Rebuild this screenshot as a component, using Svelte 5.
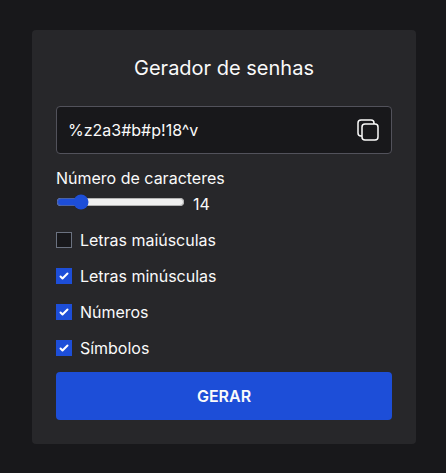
<script>
  let length = $state(14);
  let password = $state('%z2a3#b#p!18^v');
  let options = $state([
    { label: 'Letras maiúsculas', chars: 'ABCDEFGHIJKLMNOPQRSTUVWXYZ', checked: false },
    { label: 'Letras minúsculas', chars: 'abcdefghijklmnopqrstuvwxyz', checked: true },
    { label: 'Números', chars: '0123456789', checked: true },
    { label: 'Símbolos', chars: '!@#$%^&*', checked: true }
  ]);

  function generate() {
    const pool = options.filter((o) => o.checked).map((o) => o.chars).join('');
    if (!pool) return;
    password = Array.from({ length }, () => pool[Math.floor(Math.random() * pool.length)]).join('');
  }

  function copy() {
    navigator.clipboard?.writeText(password);
  }
</script>

<main>
  <section class="card">
    <h1>Gerador de senhas</h1>

    <div class="output">
      <input type="text" readonly value={password} aria-label="Senha" />
      <button class="copy" aria-label="Copiar" onclick={copy}>
        <svg width="24" height="24" viewBox="0 0 24 24" fill="none" stroke="currentColor" stroke-width="1.5" stroke-linejoin="round">
          <rect x="6" y="6" width="16" height="16" rx="3" />
          <path d="M18 6V5a3 3 0 0 0-3-3H5a3 3 0 0 0-3 3v10a3 3 0 0 0 3 3h1" />
        </svg>
      </button>
    </div>

    <label class="caption" for="length">Número de caracteres</label>
    <div class="range">
      <input id="length" type="range" min="8" max="48" bind:value={length} />
      <span>{length}</span>
    </div>

    <div class="options">
      {#each options as option}
        <label class="option">
          <span class="box">
            <input type="checkbox" bind:checked={option.checked} />
            {#if option.checked}
              <svg width="16" height="16" viewBox="0 0 16 16" fill="#fff">
                <path d="M12.207 4.793a1 1 0 010 1.414l-5 5a1 1 0 01-1.414 0l-2-2a1 1 0 011.414-1.414L6.5 9.086l4.293-4.293a1 1 0 011.414 0z" />
              </svg>
            {/if}
          </span>
          {option.label}
        </label>
      {/each}
    </div>

    <button class="generate" onclick={generate}>GERAR</button>
  </section>
</main>

<style>
  :global(body) {
    margin: 0;
    background: #18181b;
  }

  main {
    box-sizing: border-box;
    min-height: 473px;
    padding: 0 30px 0 32px;
    display: flex;
    align-items: center;
    justify-content: center;
    background: #18181b;
    color: #fafafa;
    font: 16px/24px Inter, sans-serif;
  }

  .card {
    box-sizing: border-box;
    width: 384px;
    height: 414px;
    padding: 24px;
    border-radius: 4px;
    background: #27272a;
    display: flex;
    flex-direction: column;
  }

  h1 {
    margin: 0 0 24px;
    font-size: 20px;
    line-height: 28px;
    font-weight: 400;
    text-align: center;
  }

  .output {
    box-sizing: border-box;
    height: 48px;
    flex-shrink: 0;
    padding: 0 11px;
    border: 1px solid #52525b;
    border-radius: 4px;
    background: #18181b;
    display: flex;
    align-items: center;
    justify-content: space-between;
  }

  .output input {
    flex: 1;
    min-width: 0;
    padding: 0;
    border: 0;
    outline: 0;
    background: none;
    color: inherit;
    font: inherit;
  }

  button {
    border: 0;
    padding: 0;
    color: inherit;
    font: inherit;
    cursor: pointer;
  }

  .copy {
    display: flex;
    background: none;
  }

  .caption {
    margin-top: 12px;
  }

  .range {
    display: flex;
    height: 26px;
    gap: 8px;
  }

  .range input {
    width: 129px;
    height: 16px;
    margin: 4px 0 0;
    accent-color: #1d4ed8;
  }

  .range span {
    padding-top: 2px;
  }

  .options {
    margin-top: 12px;
    display: flex;
    flex-direction: column;
    gap: 12px;
  }

  .option {
    display: flex;
    align-items: center;
    gap: 8px;
    letter-spacing: -0.02px;
  }

  .box {
    display: grid;
    width: 16px;
    height: 16px;
  }

  .box > :global(*) {
    grid-area: 1 / 1;
  }

  .box input {
    appearance: none;
    box-sizing: border-box;
    width: 16px;
    height: 16px;
    margin: 0;
    border: 1px solid #6b7280;
    background: #18181b;
  }

  .box input:checked {
    border-color: #1d4ed8;
    background: #1d4ed8;
  }

  .box svg {
    pointer-events: none;
  }

  .generate {
    height: 48px;
    margin-top: 12px;
    border-radius: 4px;
    background: #1d4ed8;
    font-weight: 600;
  }
</style>
